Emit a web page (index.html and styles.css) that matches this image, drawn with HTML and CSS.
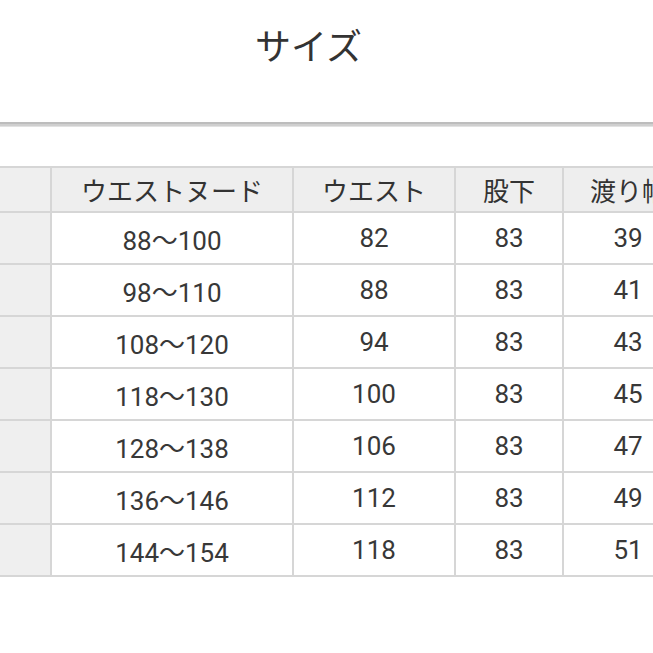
FILE: index.html
```html
<!DOCTYPE html>
<html lang="ja">
<head>
<meta charset="utf-8">
<link rel="stylesheet" href="styles.css">
</head>
<body>
<div class="page">
  <h1 class="title">サイズ</h1>
  <div class="rule"></div>
  <table class="size-table">
    <thead>
      <tr>
        <th class="side"></th>
        <th class="c-nude">ウエストヌード</th>
        <th class="c-waist">ウエスト</th>
        <th class="c-inseam">股下</th>
        <th class="c-thigh">渡り幅</th>
      </tr>
    </thead>
    <tbody>
      <tr><td class="side"></td><td>88〜100</td><td>82</td><td>83</td><td>39</td></tr>
      <tr><td class="side"></td><td>98〜110</td><td>88</td><td>83</td><td>41</td></tr>
      <tr><td class="side"></td><td>108〜120</td><td>94</td><td>83</td><td>43</td></tr>
      <tr><td class="side"></td><td>118〜130</td><td>100</td><td>83</td><td>45</td></tr>
      <tr><td class="side"></td><td>128〜138</td><td>106</td><td>83</td><td>47</td></tr>
      <tr><td class="side"></td><td>136〜146</td><td>112</td><td>83</td><td>49</td></tr>
      <tr><td class="side"></td><td>144〜154</td><td>118</td><td>83</td><td>51</td></tr>
    </tbody>
  </table>
</div>
</body>
</html>
```
FILE: styles.css
```css
html, body {
  margin: 0;
  padding: 0;
  background: #ffffff;
  overflow: hidden;
}
.page {
  width: 653px;
  height: 653px;
  overflow: hidden;
  font-family: "Roboto", "Noto Sans CJK JP", sans-serif;
  color: #333333;
}
.title {
  margin: 0;
  padding: 20px 36px 0 0;
  height: 100px;
  box-sizing: border-box;
  text-align: center;
  font-family: "Noto Sans CJK JP", sans-serif;
  font-weight: 400;
  font-size: 36px;
  line-height: 48px;
  color: #333333;
}
.rule {
  margin-top: 22px;
  height: 2px;
  border-top: 2px solid #bdbdbd;
  background: #cfcfcf;
  border-bottom: 1px solid #e2e2e2;
}
.size-table {
  margin-top: 39px;
  border-collapse: separate;
  border-spacing: 0;
  table-layout: fixed;
  width: 694px;
  border-top: 2px solid #d6d6d6;
}
.size-table th,
.size-table td {
  padding: 0;
  text-align: center;
  border-right: 2px solid #d6d6d6;
  border-bottom: 2px solid #d6d6d6;
  font-weight: 400;
}
.size-table th {
  height: 43px;
  background: #eeeeee;
  font-family: "Noto Sans CJK JP", sans-serif;
  font-size: 26px;
  color: #333333;
}
.size-table td {
  height: 50px;
  font-size: 26px;
  color: #383838;
  background: #ffffff;
}
.size-table .side {
  width: 50px;
  background: #efefef;
}
.size-table .c-nude { width: 240px; }
.size-table .c-waist { width: 160px; }
.size-table .c-inseam { width: 106px; }
.size-table .c-thigh { width: 130px; border-right: none; }
```
